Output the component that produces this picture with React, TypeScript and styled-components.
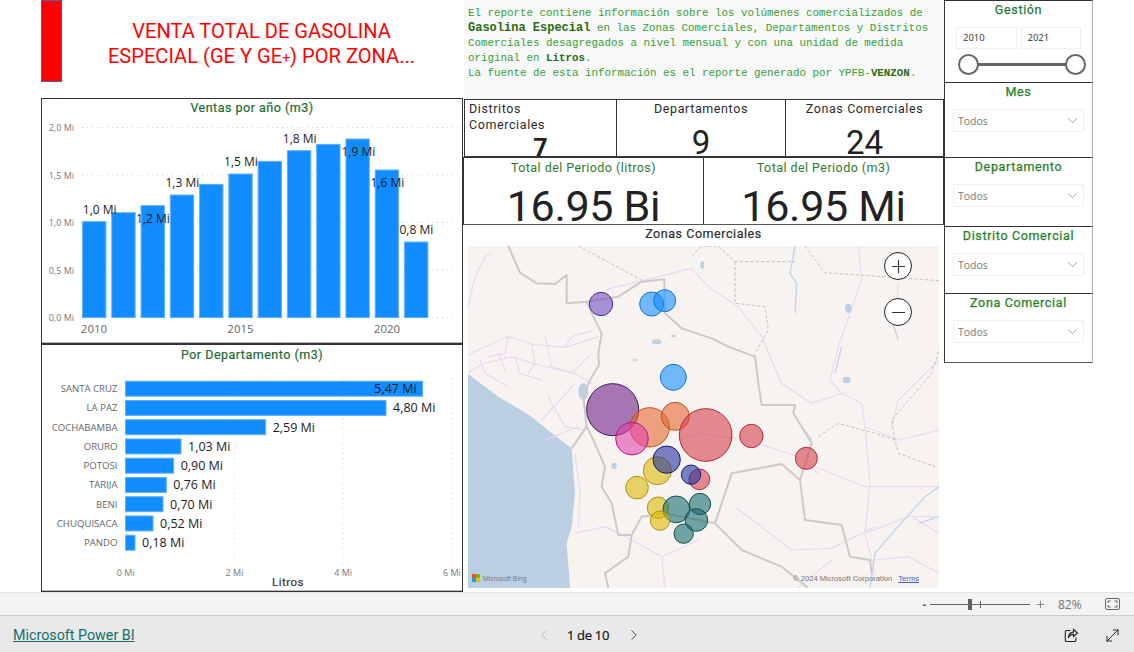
import React from "react";
import styled, { createGlobalStyle } from "styled-components";
import { ChevronDown, ChevronLeft, ChevronRight, Minus, MoveDiagonal, Plus } from "lucide-react";

const Global = createGlobalStyle`
  html, body { margin: 0; padding: 0; background: #fff; overflow: hidden; }
  * { box-sizing: border-box; }
  #root { width: 1134px; height: 652px; }
`;

const DIN = `Roboto, "Liberation Sans", sans-serif`;
const SEGOE = `"Open Sans", "Noto Sans", sans-serif`;

const Page = styled.div`
  width: 1134px; height: 652px; display: flex; flex-direction: column; font-family: ${DIN}; overflow: hidden;
`;
const Canvas = styled.main`
  height: 592px; padding-left: 41px; display: flex; background: #fff;
`;
const LeftCol = styled.section`width: 422px; display: flex; flex-direction: column;`;
const MidCol = styled.section`width: 481px; display: flex; flex-direction: column;`;
const RightCol = styled.aside`width: 149px; display: flex; flex-direction: column;`;

const Header = styled.header`height: 98px; display: flex; align-items: flex-start;`;
const RedBar = styled.div`width: 21px; height: 82px; background: #ff0000; border: 1px solid #5a5a9a;`;
const Title = styled.h1`
  margin: 0; padding: 19px 2px 0 0; flex: 1; text-align: center; color: #ff0000; font-weight: 400; font-size: 20.1px; line-height: 25px; white-space: nowrap;
`;
const TitlePlus = styled.span`font-size: 14px;`;
const ChartCard = styled.div<{ $h: number }>`
  height: ${p => p.$h}px; border: 1px solid #333; box-shadow: inset 0 -1px 0 #bbb; overflow: hidden; background: #fff; position: relative;
`;
const ChartTitle = styled.h2<{ $top?: number }>`
  margin: 0; height: 20px; padding-top: ${p => p.$top ?? 0}px; text-align: center; font-size: 12.5px; line-height: 18px; font-weight: 400; letter-spacing: .5px; color: #1b6a30;
  -webkit-text-stroke: .2px #1b6a30;
`;
const Plot = styled.svg`display: block;`;

const Description = styled.div`
  height: 99px; margin-left: 1px; background: #f8f8f8; padding: 5.5px 0 0 4px; font-family: "Liberation Mono", monospace; font-size: 10.83px; line-height: 15px; color: #36a036; white-space: pre;
`;
const Strong = styled.b`color: #2c6a12; font-weight: 700;`;
const BigStrong = styled(Strong)`font-size: 12px;`;

const KpiRow = styled.div`height: 58px; display: flex; margin-left: 1px; border: 1px solid #333;`;
const Kpi = styled.div<{ $w: number; $left?: boolean }>`
  width: ${p => p.$w}px; overflow: hidden; position: relative; padding: 1px 4px 0; text-align: ${p => (p.$left ? "left" : "center")};
  & + & { border-left: 1px solid #333; }
`;
const KpiLabel = styled.div`font-size: 12.5px; line-height: 16px; letter-spacing: .6px; color: #2b2b2b;`;
const KpiValue = styled.div<{ $small?: boolean }>`
  font-size: ${p => (p.$small ? 25 : 33)}px; line-height: 32px; color: #222; margin-top: ${p => (p.$small ? 0 : 10)}px; text-align: center; font-weight: ${p => (p.$small ? 700 : 400)};
  height: 32px;
`;
const TotalRow = styled.div`height: 68px; display: flex; border: 1px solid #333; border-bottom: 1px solid #555;`;
const Total = styled.div<{ $w: number }>`
  width: ${p => p.$w}px; overflow: hidden; text-align: center; padding-top: 2px;
  & + & { border-left: 1px solid #333; }
`;
const TotalLabel = styled.div`font-size: 12.5px; line-height: 16px; letter-spacing: .45px; color: #2f7a2f;`;
const TotalValue = styled.div`font-size: 43px; line-height: 50px; margin-top: 5px; color: #222; letter-spacing: -.3px;`;

const MapCard = styled.div`height: 367px; display: flex; flex-direction: column; align-items: flex-start;`;
const MapTitle = styled.div`width: 100%; height: 21px; text-align: center; font-size: 12.5px; line-height: 18px; letter-spacing: .55px; color: #2b2b2b; -webkit-text-stroke: .2px #2b2b2b;`;
const MapFrame = styled.div`margin-left: 5px; width: 471px; height: 342px; position: relative; overflow: hidden; background: #f6f3f0;`;
const MapBtn = styled.button<{ $top: number }>`
  position: absolute; left: 416px; top: ${p => p.$top}px; width: 28px; height: 28px; padding: 0; border-radius: 50%; border: 1.5px solid #222; background: #fff; color: #333; display: flex; align-items: center; justify-content: center;
`;
const BingMark = styled.div`
  position: absolute; left: 4px; bottom: 6px; display: flex; align-items: center; gap: 3px; font: 400 6.9px "Liberation Sans", sans-serif; color: #7b7b7b;
`;
const BingGrid = styled.span`display: grid; grid-template-columns: 4px 4px; grid-auto-rows: 4px; gap: 0;`;
const Sq = styled.i<{ $c: string }>`display: block; background: ${p => p.$c};`;
const Credit = styled.div`
  position: absolute; right: 20px; bottom: 5px; display: flex; gap: 6px; font: 7.6px "Liberation Sans", sans-serif; color: #777;
`;
const Terms = styled.span`color: #4a5db0; text-decoration: underline;`;

const Slicer = styled.div<{ $h: number; $last?: boolean }>`
  height: ${p => p.$h}px; border: 1px solid #333; border-right: 1px solid #b0b0b0; border-bottom-color: #555; border-bottom-width: ${p => (p.$last ? 1 : 0)}px; text-align: center; padding-top: 1px;
`;
const SlicerTitle = styled.div<{ $teal?: boolean }>`
  font-size: 12.5px; line-height: 16px; letter-spacing: .65px; font-weight: 400; color: ${p => (p.$teal ? "#1f7a3a" : "#1f7f24")}; -webkit-text-stroke: .25px currentColor;
`;
const Dropdown = styled.div`
  margin: 9px 8px 0; height: 23px; border: 1px solid #efefef; display: flex; align-items: center; justify-content: space-between; padding: 0 2px 0 4px; color: #7a7a7a; font: 10.5px ${SEGOE};
`;
const RangeInputs = styled.div`display: flex; gap: 4px; margin: 9px 11px 0;`;
const RangeInput = styled.div`
  width: 62px; height: 22px; border: 1px solid #efefef; font: 9.5px ${SEGOE}; color: #333; text-align: left; padding-left: 6px; line-height: 20px;
`;
const RangeTrack = styled.div`
  margin: 5px 6px 0 13px; height: 21px; position: relative; display: flex; align-items: center; justify-content: space-between;
  &::before { content: ""; position: absolute; left: 10px; right: 10px; top: 9px; height: 3px; background: #666; }
`;
const RangeKnob = styled.span`
  width: 21px; height: 21px; border-radius: 50%; border: 2px solid #666; background: #fff; position: relative;
`;

const ZoomBar = styled.div`
  height: 23px; background: #f3f3f3; border-top: 1px solid #e3e3e3; display: flex; align-items: center; justify-content: flex-end; padding-right: 14px; color: #606060;
`;
const ZoomSign = styled.span`font: 700 12px ${SEGOE}; width: 9px; text-align: center; color: #666;`;
const ZoomTrack = styled.div`
  width: 100px; height: 1px; background: #666; margin: 0 5px 0 1px; position: relative;
`;
const ZoomThumb = styled.span`position: absolute; left: 38px; top: -5px; width: 4px; height: 11px; background: #606060;`;
const ZoomTick = styled.span`position: absolute; left: 50px; top: -3px; width: 1px; height: 7px; background: #666;`;
const ZoomPct = styled.span`font: 12px ${SEGOE}; color: #777; margin-left: 12px; width: 47px;`;

const Footer = styled.footer`
  height: 37px; background: #e9e9e9; border-top: 1px solid #c9c9c9; display: flex; align-items: center; position: relative; padding: 2px 12px 0 13px;
`;
const BrandLink = styled.a`font: 400 14.3px ${DIN}; color: #11706d; text-decoration: underline;`;
const Pager = styled.div`
  position: absolute; left: 535px; top: 0; height: 38px; display: flex; align-items: center; gap: 13px; font: 400 13px ${SEGOE}; color: #111; -webkit-text-stroke: .2px #111;
`;
const PagerText = styled.span`width: 44px; margin-right: 2px; text-align: center; letter-spacing: -.3px; white-space: nowrap;`;
const FootIcons = styled.div`margin-left: auto; display: flex; gap: 24px; align-items: center; color: #222;`;

const ticks = ["2,0 Mi", "1,5 Mi", "1,0 Mi", "0,5 Mi", "0,0 Mi"];
const barsY = [665, 638, 617, 585, 553, 522, 484, 452, 433, 417, 510, 726];
const yearLabels: [string, number, number][] = [
  ["1,0 Mi", 299, 629], ["1,2 Mi", 459, 656], ["1,3 Mi", 547, 548], ["1,5 Mi", 723, 485],
  ["1,8 Mi", 899, 416], ["1,9 Mi", 1075, 455], ["1,6 Mi", 1162, 548], ["0,8 Mi", 1249, 689],
];

const YearChart = () => (
  <Plot width={420} height={224} viewBox="0 0 420 224">
    {ticks.map((t, i) => {
      const y = 8.5 + i * 47.5;
      return (
        <g key={t}>
          <line x1={40} x2={420} y1={y} y2={y} stroke="#d4d4d4" strokeDasharray="1 4" />
          <text x={32} y={y + 3.5} fontSize={9} textAnchor="end" fill="#777" fontFamily={SEGOE}>{t}</text>
        </g>
      );
    })}
    {barsY.map((t, i) => {
      const top = t / 3 - 119;
      return <rect key={i} x={40.5 + i * 29.27} y={top} width={23.4} height={198.6 - top} fill="#118dff" stroke="#63b0ff" strokeWidth={1} />;
    })}
    {yearLabels.map(([l, x, y]) => (
      <text key={l} x={x / 3 - 42} y={y / 3 - 119 + 4} fontSize={12} textAnchor="middle" fill="#1c1c1c" fontFamily={SEGOE}>{l}</text>
    ))}
    {[["2010", 52], ["2015", 198.5], ["2020", 345]].map(([l, x]) => (
      <text key={l as string} x={x as number} y={214} fontSize={11.5} textAnchor="middle" fill="#666" fontFamily={SEGOE}>{l}</text>
    ))}
  </Plot>
);

const depts: [string, number, string, boolean?][] = [
  ["SANTA CRUZ", 1268, "5,47 Mi", true], ["LA PAZ", 1158, "4,80 Mi"], ["COCHABAMBA", 797, "2,59 Mi"],
  ["ORURO", 543, "1,03 Mi"], ["POTOSI", 521, "0,90 Mi"], ["TARIJA", 499, "0,76 Mi"],
  ["BENI", 489, "0,70 Mi"], ["CHUQUISACA", 459, "0,52 Mi"], ["PANDO", 405, "0,18 Mi"],
];

const DeptChart = () => (
  <Plot width={420} height={225} viewBox="0 0 420 225">
    {[0, 1, 2, 3].map(i => {
      const x = 83.8 + i * 108.7;
      return (
        <g key={i}>
          <line x1={x} x2={x} y1={13} y2={199} stroke="#d8d8d8" strokeDasharray="1 4" />
          <text x={x} y={211} fontSize={9} textAnchor="middle" fill="#777" fontFamily={SEGOE}>{i * 2} Mi</text>
        </g>
      );
    })}
    {depts.map(([name, end, val, inside], i) => {
      const cy = 23.7 + i * 19.25;
      const x1 = end / 3 - 42;
      return (
        <g key={name}>
          <text x={75.5} y={cy + 3.5} fontSize={9.6} textAnchor="end" fill="#666" fontFamily={SEGOE}>{name}</text>
          <rect x={83.5} y={cy - 7.5} width={x1 - 83.5} height={15} fill="#118dff" stroke="#63b0ff" />
          <text x={inside ? x1 - 6 : x1 + 7} y={cy + 4.5} fontSize={12.5} textAnchor={inside ? "end" : "start"} fill="#1c1c1c" fontFamily={SEGOE}>{val}</text>
        </g>
      );
    })}
    <text x={246} y={220.5} fontSize={11.5} textAnchor="middle" fill="#333" stroke="#333" strokeWidth={0.2} fontFamily={DIN} letterSpacing=".5">Litros</text>
  </Plot>
);

const pink = [
  "M9 345 L60 320 L130 290 L200 312 L300 322 L400 290",
  "M50 372 L140 350 L210 372 L330 400 L380 432",
  "M9 200 L30 110 L60 50 L80 40",
  "M45 360 L60 400 L130 440 M100 340 L125 400 M150 350 L165 400 L230 420 M240 290 L260 380 L320 400",
  "M9 400 L50 372 M130 290 L120 340 L70 350 M200 312 L210 372 L190 400 M300 322 L320 290 L385 270 M320 400 L380 340",
  "M230 540 L330 430 M240 600 L340 560 M330 640 L345 760 L340 860 M250 470 L300 560 L360 570",
  "M420 150 L560 115 L680 85 L730 140 L820 200 L890 290 L950 430 L1040 490 L1130 460 L1190 490 L1200 560 L1300 600 L1422 570",
  "M1180 18 L1190 120 L1120 320 L1095 420 L1130 460",
  "M1200 560 L1215 730 L1200 880 L1230 1000",
  "M1050 680 L1200 740 L1422 740",
  "M810 800 L980 930 L1100 925 L1230 860",
  "M1422 830 L1330 830 L1200 880 M1340 830 L1422 880 M1230 960 L1330 950 L1422 1000",
  "M640 600 L700 580 L850 600 L1000 650 L1060 700",
  "M330 880 L420 860 L500 900 L590 950 L600 1044 M590 950 L700 900",
  "M1300 130 L1290 260 M1422 360 L1300 480 L1280 560 M1000 1044 L1100 960",
];
const dashed = [
  "M340 18 L530 120", "M680 50 L710 18 L760 18 L810 65 L990 65", "M810 65 L810 190 L900 200 L910 270 L870 340",
  "M1020 18 L1080 98 L1422 122", "M1060 590 L1120 550 L1230 580 L1290 600 L1300 640 L1410 680",
  "M1290 600 L1280 540 L1340 470 L1400 400 L1422 330",
];
const borders = [
  "M130 18 L165 98 L215 130 L270 132 L305 105 L305 190 L365 185 L385 230 L410 280 L400 340 L402 375 L375 420 L355 470 L365 560 L385 600 L420 680 L410 740 L440 790 L460 885 L500 885 L530 830 L600 820 L750 850 L800 700 L950 672 L1005 720 L1040 610 L1010 560 L985 520 L990 495 L890 495 L880 430 L870 350 L790 320 L740 295 L650 265 L600 220 L598 118 L530 125 L460 170 L365 185",
  "M1005 720 L1020 840 L1130 855 L1155 950 L1215 960 L1220 1000",
  "M750 850 L830 930 L950 980 L1030 1044",
  "M500 885 L490 950 L420 1000 L430 1044",
  "M365 560 L320 625",
];
const rivers = [
  "M990 18 L975 100 L995 130 L990 220", "M1130 320 L1110 400", "M1422 740 L1380 770 L1290 870 L1230 940 L1215 1044",
  "M1422 830 L1360 850", "M1280 240 L1300 300", "M1010 560 L1040 600",
];
const lakes: [number, number, number, number][] = [
  [355, 455, 15, 25], [1145, 420, 12, 10], [712, 75, 6, 12], [575, 305, 14, 8], [625, 288, 7, 4], [447, 678, 8, 10], [1150, 205, 10, 14], [510, 360, 7, 3],
];
type Tone = { fill: string; line: string };
const TONES: Record<string, Tone> = {
  violet: { fill: "#7048c0", line: "#4a2a9c" },
  blue: { fill: "#118dff", line: "#1470d4" },
  plum: { fill: "#701a86", line: "#3a1660" },
  orange: { fill: "#e6642a", line: "#c4501f" },
  red: { fill: "#d63a48", line: "#ae2a38" },
  pink: { fill: "#e040ac", line: "#b01a8a" },
  navy: { fill: "#1e2ca0", line: "#141c78" },
  yellow: { fill: "#dcb800", line: "#ae9010" },
  teal: { fill: "#11696e", line: "#0e5055" },
};
const bubbles: [number, number, number, keyof typeof TONES][] = [
  [408, 192, 35, "violet"], [560, 192, 36, "blue"], [599, 182, 33, "blue"], [625, 412, 39, "blue"],
  [443, 509, 78, "plum"], [554, 562, 59, "orange"], [631, 529, 42, "orange"], [722, 585, 79, "red"],
  [859, 588, 35, "red"], [1024, 655, 33, "red"], [501, 596, 49, "pink"], [577, 692, 42, "yellow"],
  [605, 659, 41, "navy"], [516, 743, 34, "yellow"], [703, 718, 31, "red"], [678, 704, 29, "navy"],
  [579, 803, 32, "yellow"], [634, 808, 40, "teal"], [705, 792, 32, "teal"], [694, 840, 34, "teal"],
  [585, 842, 29, "yellow"], [656, 881, 29, "teal"],
];

const MapDrawing = () => (
  <Plot width={471} height={342} viewBox="9 18 1413 1026">
    <rect x={9} y={18} width={1413} height={1026} fill="#f6f3f0" />
    <g style={{ filter: "blur(1px)" }}>
      <path d="M9 402 L100 470 L200 530 L260 580 L320 625 L330 760 L320 860 L305 910 L315 1044 L9 1044 Z" fill="#bbcfe3" />
      {pink.map(d => <path key={d} d={d} fill="none" stroke="#ecd6f2" strokeWidth={3.5} />)}
      {dashed.map(d => <path key={d} d={d} fill="none" stroke="#c4c1bd" strokeWidth={3} strokeDasharray="10 6" />)}
      {rivers.map(d => <path key={d} d={d} fill="none" stroke="#c2d5e8" strokeWidth={4} />)}
      {lakes.map(([x, y, a, b]) => <ellipse key={x} cx={x} cy={y} rx={a} ry={b} fill="#bdd1e5" />)}
      {borders.map(d => <path key={d} d={d} fill="none" stroke="#cdcac6" strokeWidth={6} strokeLinejoin="round" />)}
    </g>
    {bubbles.map(([x, y, r, t], i) => (
      <circle key={i} cx={x} cy={y} r={r} fill={TONES[t].fill} fillOpacity={0.58} stroke={TONES[t].line} strokeWidth={3} />
    ))}
  </Plot>
);

const ShareIcon = () => (
  <svg width="15" height="15" viewBox="0 0 15 15" fill="none" stroke="#222" strokeWidth="1.1">
    <path d="M6.5 2.5H2.5a1.2 1.2 0 0 0-1.2 1.2v8.6a1.2 1.2 0 0 0 1.2 1.2h8.2a1.2 1.2 0 0 0 1.2-1.2V9.5" />
    <path d="M9.5 1.5l4 3.5-4 3.5V6.4C7 6.4 5.3 7.6 4.5 10c0-3.6 2-5.7 5-5.9z" />
  </svg>
);
const FitIcon = () => (
  <svg width="15" height="12" viewBox="0 0 15 12" fill="none" stroke="#666" strokeWidth="1">
    <rect x=".5" y=".5" width="14" height="11" rx="1.5" />
    <path d="M3 5V3h2.5M12 5V3H9.5M3 7v2h2.5M12 7v2H9.5" />
  </svg>
);

const Drop = ({ title }: { title: string }) => (
  <>
    <SlicerTitle>{title}</SlicerTitle>
    <Dropdown>Todos<ChevronDown size={17} strokeWidth={0.9} color="#777" /></Dropdown>
  </>
);

export default function App() {
  return (
    <Page>
      <Global />
      <Canvas>
        <LeftCol>
          <Header>
            <RedBar />
            <Title>VENTA TOTAL DE GASOLINA<br />ESPECIAL (GE Y GE<TitlePlus>+</TitlePlus>) POR ZONA...</Title>
          </Header>
          <ChartCard $h={246}>
            <ChartTitle>Ventas por año (m3)</ChartTitle>
            <YearChart />
          </ChartCard>
          <ChartCard $h={248}>
            <ChartTitle $top={1}>Por Departamento (m3)</ChartTitle>
            <DeptChart />
          </ChartCard>
        </LeftCol>
        <MidCol>
          <Description>
            El reporte contiene información sobre los volúmenes comercializados de{"\n"}
            <BigStrong>Gasolina Especial</BigStrong> en las Zonas Comerciales, Departamentos y Distritos{"\n"}
            Comerciales desagregados a nivel mensual y con una unidad de medida{"\n"}
            original en <Strong>Litros</Strong>.{"\n"}
            La fuente de esta información es el reporte generado por YPFB-<Strong>VENZON</Strong>.
          </Description>
          <KpiRow>
            <Kpi $w={151} $left>
              <KpiLabel>Distritos<br />Comerciales</KpiLabel>
              <KpiValue $small>7</KpiValue>
            </Kpi>
            <Kpi $w={169}>
              <KpiLabel>Departamentos</KpiLabel>
              <KpiValue>9</KpiValue>
            </Kpi>
            <Kpi $w={158}>
              <KpiLabel>Zonas Comerciales</KpiLabel>
              <KpiValue>24</KpiValue>
            </Kpi>
          </KpiRow>
          <TotalRow>
            <Total $w={239}>
              <TotalLabel>Total del Periodo (litros)</TotalLabel>
              <TotalValue>16.95 Bi</TotalValue>
            </Total>
            <Total $w={240}>
              <TotalLabel>Total del Periodo (m3)</TotalLabel>
              <TotalValue>16.95 Mi</TotalValue>
            </Total>
          </TotalRow>
          <MapCard>
            <MapTitle>Zonas Comerciales</MapTitle>
            <MapFrame>
              <MapDrawing />
              <MapBtn $top={6}><Plus size={21} strokeWidth={1.3} /></MapBtn>
              <MapBtn $top={52}><Minus size={21} strokeWidth={1.3} /></MapBtn>
              <BingMark>
                <BingGrid><Sq $c="#f25022" /><Sq $c="#7fba00" /><Sq $c="#00a4ef" /><Sq $c="#ffb900" /></BingGrid>
                Microsoft Bing
              </BingMark>
              <Credit><span>© 2024 Microsoft Corporation</span><Terms>Terms</Terms></Credit>
            </MapFrame>
          </MapCard>
        </MidCol>
        <RightCol>
          <Slicer $h={82}>
            <SlicerTitle $teal>Gestión</SlicerTitle>
            <RangeInputs><RangeInput>2010</RangeInput><RangeInput>2021</RangeInput></RangeInputs>
            <RangeTrack><RangeKnob /><RangeKnob /></RangeTrack>
          </Slicer>
          <Slicer $h={75}><Drop title="Mes" /></Slicer>
          <Slicer $h={69}><Drop title="Departamento" /></Slicer>
          <Slicer $h={67}><Drop title="Distrito Comercial" /></Slicer>
          <Slicer $h={70} $last><Drop title="Zona Comercial" /></Slicer>
        </RightCol>
      </Canvas>
      <ZoomBar>
        <ZoomSign>-</ZoomSign>
        <ZoomTrack><ZoomThumb /><ZoomTick /></ZoomTrack>
        <Plus size={11} strokeWidth={1.6} color="#666" />
        <ZoomPct>82%</ZoomPct>
        <FitIcon />
      </ZoomBar>
      <Footer>
        <BrandLink>Microsoft Power BI</BrandLink>
        <Pager>
          <ChevronLeft size={18} strokeWidth={1.1} color="#aaa" />
          <PagerText>1 de 10</PagerText>
          <ChevronRight size={18} strokeWidth={1.3} color="#444" />
        </Pager>
        <FootIcons>
          <ShareIcon />
          <MoveDiagonal size={19} strokeWidth={1.2} />
        </FootIcons>
      </Footer>
    </Page>
  );
}
